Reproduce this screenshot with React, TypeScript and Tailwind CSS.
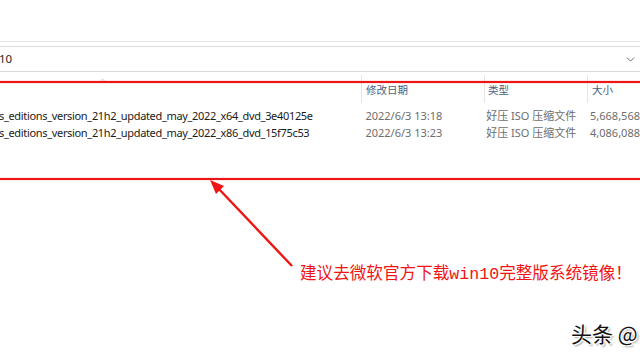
import { ChevronDown, ChevronUp } from 'lucide-react';

const files = [
  { name: 's_editions_version_21h2_updated_may_2022_x64_dvd_3e40125e', date: '2022/6/3 13:18', size: '5,668,568' },
  { name: 's_editions_version_21h2_updated_may_2022_x86_dvd_15f75c53', date: '2022/6/3 13:23', size: '4,086,088' },
];

const ui = "font-['Noto_Sans','Noto_Sans_CJK_SC',sans-serif]";

export default function App() {
  return (
    <div className={`relative h-[360px] w-[640px] overflow-hidden bg-white ${ui}`}>
      {/* ribbon bottom edge */}
      <div className="h-[42px] border-b border-[#e3e3e3]" />

      {/* address bar */}
      <div className="mt-[4px] flex h-[26px] items-center justify-between border-y border-[#dadada] pr-[3px] text-[11.5px] text-[#1e1e1e]">
        <span className="-ml-[1px]">10</span>
        <ChevronDown className="h-[13px] w-[13px] text-[#555]" strokeWidth={1.6} />
      </div>

      {/* column header */}
      <div className="relative mt-[3px] flex h-[28px] text-[10.5px] text-[#4c607a]">
        <ChevronUp className="absolute left-[98px] top-[1px] h-[8px] w-[9px] text-[#b5b5b5]" strokeWidth={2} />
        <div className="w-[361px]" />
        <div className="flex w-[123px] items-center border-l border-[#e5e5e5] pl-[4px] pt-[3px]">修改日期</div>
        <div className="flex w-[103px] items-center border-l border-[#e5e5e5] pl-[3px] pt-[3px]">类型</div>
        <div className="flex flex-1 items-center border-l border-[#e5e5e5] pl-[4px] pt-[3px]">大小</div>
      </div>

      {/* rows */}
      <div className="mt-[5px] flex flex-col text-[11px]">
        {files.map((f) => (
          <div key={f.name} className="flex h-[17px] items-center whitespace-nowrap">
            <div className="-ml-[1px] w-[362px] tracking-[-0.33px] text-[#1a1a1a]">{f.name}</div>
            <div className="w-[122px] pl-[5px] text-[#6d6d6d]">{f.date}</div>
            <div className="w-[104px] pl-[4px] text-[#6d6d6d]">好压 ISO 压缩文件</div>
            <div className="flex-1 pl-[4px] text-[#6d6d6d]">{f.size}</div>
          </div>
        ))}
      </div>

      {/* annotation drawn over the screenshot */}
      <svg className="pointer-events-none absolute inset-0" width="640" height="360" viewBox="0 0 640 360">
        <rect x="-6" y="82" width="652" height="97" fill="none" stroke="#ee1515" strokeWidth="2.2" />
        <line x1="292" y1="266" x2="217" y2="187" stroke="#ee1515" strokeWidth="2.4" />
        <polygon points="210,180 224,186 216,194" fill="#ee1515" />
      </svg>

      <div className="absolute left-[300px] top-[263px] whitespace-nowrap font-['Liberation_Mono','Noto_Sans_CJK_SC',monospace] text-[16.6px] leading-[24px] text-[#f01414]">
        建议去微软官方下载win10完整版系统镜像！
      </div>

      <div className="absolute left-[571px] top-[318px] whitespace-nowrap font-['Noto_Sans_CJK_SC',sans-serif] text-[21px] leading-[30px] text-[#111] [text-shadow:1px_1px_0_#fff,-1px_-1px_0_#fff,1px_-1px_0_#fff,-1px_1px_0_#fff,2px_2px_2px_#999]">
        头条 @
      </div>
    </div>
  );
}
